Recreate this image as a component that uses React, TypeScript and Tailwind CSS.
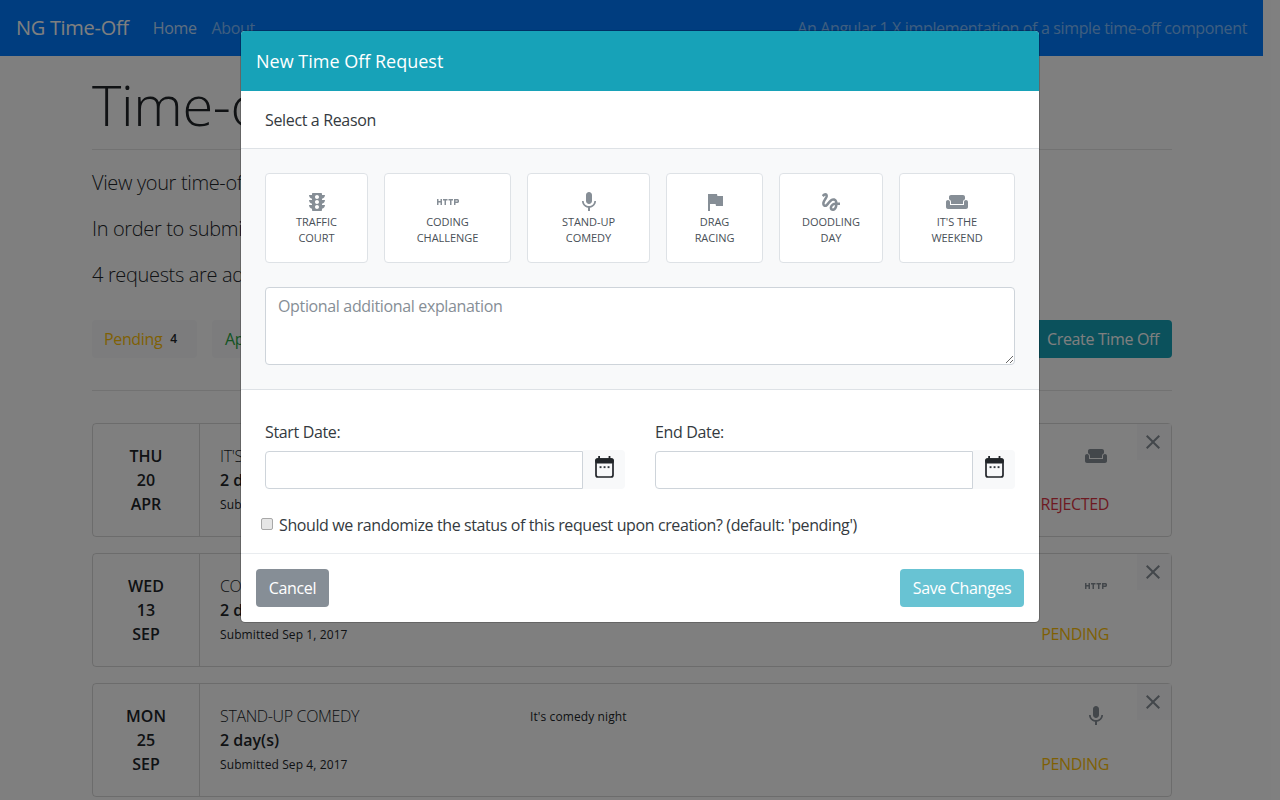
import React from "react";

const P = {
  traffic: "M20 10h-3V8.86c1.72-.45 3-2 3-3.86h-3V4c0-.55-.45-1-1-1H8c-.55 0-1 .45-1 1v1H4c0 1.86 1.28 3.41 3 3.86V10H4c0 1.86 1.28 3.41 3 3.86V15H4c0 1.86 1.28 3.41 3 3.86V20c0 .55.45 1 1 1h8c.55 0 1-.45 1-1v-1.14c1.72-.45 3-2 3-3.86h-3v-1.14c1.72-.45 3-2 3-3.86zm-8 9c-1.11 0-2-.9-2-2s.89-2 2-2c1.1 0 2 .9 2 2s-.89 2-2 2zm0-5c-1.11 0-2-.9-2-2s.89-2 2-2c1.1 0 2 .9 2 2s-.89 2-2 2zm0-5c-1.11 0-2-.9-2-2 0-1.11.89-2 2-2 1.1 0 2 .89 2 2 0 1.1-.89 2-2 2z",
  http: "M4.5 11h-2V9H1v6h1.5v-2.5h2V15H6V9H4.5v2zm2.5-.5h1.5V15H10v-4.5h1.5V9H7v1.5zm5.5 0H14V15h1.5v-4.5H17V9h-4.5v1.5zm9-1.5H18v6h1.5v-2h2c.8 0 1.5-.7 1.5-1.5v-1c0-.8-.7-1.5-1.5-1.5zm0 2.5h-2v-1h2v1z",
  mic: "M12 14c1.66 0 2.99-1.34 2.99-3L15 5c0-1.66-1.34-3-3-3S9 3.34 9 5v6c0 1.66 1.34 3 3 3zm5.3-3c0 3-2.54 5.1-5.3 5.1S6.7 14 6.7 11H5c0 3.41 2.72 6.23 6 6.72V21h2v-3.28c3.28-.48 6-3.3 6-6.72h-1.7z",
  flag: "M14.4 6L14 4H5v17h2v-7h5.6l.4 2h7V6z",
  gesture: "M4.59 6.89c.7-.71 1.4-1.35 1.71-1.22.5.2 0 1.03-.3 1.52-.25.42-2.86 3.89-2.86 6.31 0 1.28.48 2.34 1.34 2.98.75.56 1.74.73 2.64.46 1.07-.31 1.95-1.4 3.06-2.77 1.21-1.49 2.83-3.44 4.08-3.44 1.63 0 1.65 1.01 1.76 1.79-3.78.64-5.38 3.67-5.38 5.37 0 1.7 1.44 3.09 3.21 3.09 1.63 0 4.29-1.33 4.69-6.1H21v-2.5h-2.47c-.15-1.65-1.09-4.2-4.03-4.2-2.25 0-4.18 1.91-4.94 2.84-.58.73-2.06 2.48-2.29 2.72-.25.3-.68.84-1.11.84-.45 0-.72-.83-.36-1.92.35-1.09 1.4-2.86 1.85-3.52.78-1.14 1.3-1.92 1.3-3.28C8.95 3.69 7.31 3 6.44 3 5.12 3 3.97 4 3.72 4.25c-.36.36-.66.66-.88.93l1.75 1.71zm9.29 11.66c-.31 0-.74-.26-.74-.72 0-.6.73-2.2 2.87-2.76-.3 2.69-1.43 3.48-2.13 3.48z",
  weekend: "M21 10c-1.1 0-2 .9-2 2v3H5v-3c0-1.1-.9-2-2-2s-2 .9-2 2v5c0 1.1.9 2 2 2h18c1.1 0 2-.9 2-2v-5c0-1.1-.9-2-2-2zm-3-5H6c-1.1 0-2 .9-2 2v2.15c1.16.41 2 1.51 2 2.82V14h12v-2.03c0-1.3.84-2.4 2-2.82V7c0-1.1-.9-2-2-2z",
  close: "M19 6.41L17.59 5 12 10.59 6.41 5 5 6.41 10.59 12 5 17.59 6.41 19 12 13.41 17.59 19 19 17.59 13.41 12z",
};

function Icon({ d, className = "" }: { d: string; className?: string }) {
  return (
    <svg viewBox="0 0 24 24" width="24" height="24" fill="#868e96" className={`shrink-0 ${className}`}>
      <path d={d} />
    </svg>
  );
}

function CalendarIcon() {
  return (
    <svg viewBox="0 0 24 24" width="24" height="24" className="shrink-0 mb-[5px] mr-px">
      <rect x="4" y="4" width="17" height="18" rx="2" fill="none" stroke="#212529" strokeWidth="1.7" />
      <rect x="3.2" y="3.2" width="18.6" height="5.3" rx="2" fill="#212529" />
      <rect x="6.2" y="1" width="1.8" height="3" fill="#212529" />
      <rect x="16.6" y="1" width="1.8" height="3" fill="#212529" />
      <rect x="7.6" y="11.2" width="1.9" height="1.9" fill="#343a40" />
      <rect x="11.6" y="11.2" width="1.9" height="1.9" fill="#343a40" />
      <rect x="15.6" y="11.2" width="1.9" height="1.9" fill="#343a40" />
    </svg>
  );
}

const reasons = [
  { icon: P.traffic, a: "TRAFFIC", b: "COURT", w: "w-[103px]" },
  { icon: P.http, a: "CODING", b: "CHALLENGE", w: "w-[127px]" },
  { icon: P.mic, a: "STAND-UP", b: "COMEDY", w: "w-[123px]" },
  { icon: P.flag, a: "DRAG", b: "RACING", w: "w-[97px]" },
  { icon: P.gesture, a: "DOODLING", b: "DAY", w: "w-[104px]" },
  { icon: P.weekend, a: "IT'S THE", b: "WEEKEND", w: "w-[116px]" },
];

const cards = [
  { d: "THU", n: "20", m: "APR", title: "IT'S THE WEEKEND", sub: "Submitted Apr 2, 2017", note: "", icon: P.weekend, status: "REJECTED", color: "text-[#dc3545]" },
  { d: "WED", n: "13", m: "SEP", title: "CODING CHALLENGE", sub: "Submitted Sep 1, 2017", note: "", icon: P.http, status: "PENDING", color: "text-[#ffc107]" },
  { d: "MON", n: "25", m: "SEP", title: "STAND-UP COMEDY", sub: "Submitted Sep 4, 2017", note: "It's comedy night", icon: P.mic, status: "PENDING", color: "text-[#ffc107]" },
];

function Card({ c }: { c: (typeof cards)[number] }) {
  return (
    <div className="flex h-[114px] border border-black/15 rounded mb-4 shrink-0">
      <div className="w-[107px] border-r border-black/15 flex flex-col justify-center items-center font-semibold text-[#212529] leading-6 tracking-normal">
        <div>{c.d}</div>
        <div>{c.n}</div>
        <div>{c.m}</div>
      </div>
      <div className="w-[330px] pl-5 pt-[20px] text-[#212529]">
        <div className="font-light leading-6">{c.title}</div>
        <div className="font-semibold leading-6 tracking-normal">2 day(s)</div>
        <div className="text-xs leading-6 mt-px tracking-[0.1px]">{c.sub}</div>
      </div>
      <div className="flex-1 pt-[24px] text-xs leading-[18px] text-[#212529] tracking-[0.1px]">{c.note}</div>
      <div className="w-[62px] flex flex-col items-end pt-[20px]">
        <Icon d={c.icon} className="mr-px" />
        <div className={`mt-[24px] leading-6 whitespace-nowrap ${c.color}`}>{c.status}</div>
      </div>
      <div className="w-[34px] h-[36px] bg-[#f8f9fa] ml-[28px] flex items-center justify-center pr-[2px]">
        <Icon d={P.close} />
      </div>
    </div>
  );
}

function DateField({ label }: { label: string }) {
  return (
    <div className="w-[360px]">
      <label className="block leading-6 text-[#343a40]">{label}</label>
      <div className="flex mt-[6px] h-[39px]">
        <input type="text" className="flex-1 min-w-0 h-[38px] mt-px bg-white border border-[#ced4da] rounded-l outline-none" />
        <div className="w-[42px] bg-[#f8f9fa] rounded-r flex items-center justify-center">
          <CalendarIcon />
        </div>
      </div>
    </div>
  );
}

export default function App() {
  return (
    <div className="relative h-[800px] overflow-hidden bg-white text-[#212529] font-['Open_Sans','Liberation_Sans',sans-serif] tracking-[-0.35px]">
      <div className="w-[1263px]">
        <nav className="h-14 bg-[#007bff] flex items-center px-4">
          <span className="text-xl text-white mr-6 tracking-[-0.3px]">NG Time-Off</span>
          <span className="text-white/75 mr-4">Home</span>
          <span className="text-white/50 -ml-px">About</span>
          <span className="ml-auto text-white/50">An Angular 1.X implementation of a simple time-off component</span>
        </nav>
        <main className="mx-[92px] w-[1080px]">
          <h1 className="text-[56px] font-light leading-[67px] mt-[15px] pb-[11px] border-b border-black/10 text-[#212529]">Time-off Requests</h1>
          <p className="text-xl font-light leading-[30px] mt-[17.5px]">View your time-off requests below.</p>
          <p className="text-xl font-light leading-[30px] mt-4">In order to submit a new request, click on the button.</p>
          <p className="text-xl font-light leading-[30px] mt-4">4 requests are additionally awaiting approval.</p>
          <div className="flex items-center mt-[30.5px] pb-8 border-b border-black/10">
            <div className="h-[38px] w-[105px] bg-[#f8f9fa] rounded flex items-center pl-3 text-[#ffc107]">
              Pending<span className="ml-2 text-xs font-semibold text-[#212529]">4</span>
            </div>
            <div className="h-[38px] w-[120px] bg-[#f8f9fa] rounded flex items-center pl-[13px] ml-[15px] text-[#28a745]">Approved</div>
            <div className="ml-auto h-[38px] w-[137px] pl-[12px] bg-[#17a2b8] rounded flex items-center text-white">Create Time Off</div>
          </div>
          <div className="flex flex-col mt-8">
            {cards.map((c) => (
              <Card key={c.title} c={c} />
            ))}
          </div>
        </main>
      </div>

      <div className="absolute inset-0 bg-black/50 flex justify-center items-start pt-[30px]">
        <div className="w-[800px] bg-white bg-clip-padding border border-black/20 rounded-[5px] overflow-hidden">
          <div className="h-[60px] bg-[#17a2b8] text-white text-[18px] tracking-normal leading-[60px] px-[15px]">New Time Off Request</div>
          <div className="h-[58px] flex items-center px-6 pt-px border-b border-[#dee2e6] text-[#343a40]">Select a Reason</div>
          <div className="bg-[#f8f9fa] px-6 pt-6 pb-6 border-b border-[#dee2e6]">
            <div className="flex justify-between">
              {reasons.map((r) => (
                <div key={r.a} className={`${r.w} h-[90px] bg-white border border-[#dee2e6] rounded flex flex-col items-center pt-[16px] text-[11px] leading-4 text-[#495057] text-center tracking-[-0.05px]`}>
                  <Icon d={r.icon} />
                  <div>{r.a}</div>
                  <div>{r.b}</div>
                </div>
              ))}
            </div>
            <textarea
              placeholder="Optional additional explanation"
              className="block w-full h-[78px] mt-6 bg-white border border-[#ced4da] rounded px-3 py-[6px] leading-6 outline-none resize-y placeholder:text-[#868e96]"
            />
          </div>
          <div className="px-6 pt-[30px] pb-4 border-b border-[#e9ecef]">
            <div className="flex justify-between">
              <DateField label="Start Date:" />
              <DateField label="End Date:" />
            </div>
            <div className="flex items-center mt-6 -ml-1 leading-6 tracking-[-0.39px] text-[#343a40]">
              <span className="w-[12px] h-[12px] bg-[#e6e6e6] border border-[#a8a8a8] rounded-[2px] mr-[6px] -mt-[3px] shrink-0" />
              Should we randomize the status of this request upon creation? (default: 'pending')
            </div>
          </div>
          <div className="h-[68px] flex items-center justify-between px-[15px]">
            <div className="h-[38px] w-[73px] justify-center bg-[#868e96] rounded flex items-center text-white">Cancel</div>
            <div className="h-[38px] w-[124px] justify-center bg-[#68c3d3] rounded flex items-center text-white">Save Changes</div>
          </div>
        </div>
      </div>
    </div>
  );
}
